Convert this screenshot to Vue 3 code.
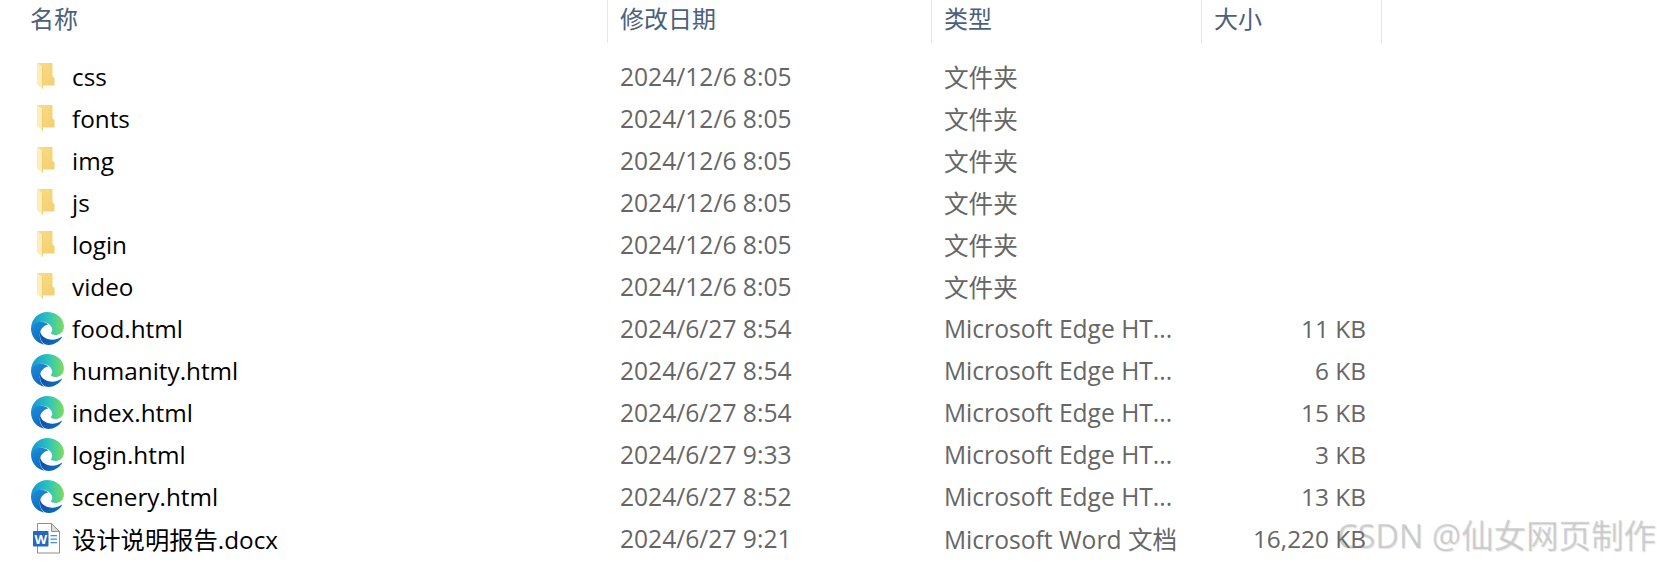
<template>
  <div class="explorer">
    <div class="list-header">
      <div v-for="col in columns" :key="col" class="head-cell">{{ col }}</div>
    </div>
    <div class="list-body">
      <div v-for="file in files" :key="file.name" class="file-row">
        <div class="name-cell">
          <span class="icon-box">
            <svg v-if="file.kind === 'folder'" class="folder-icon" width="20" height="28" viewBox="0 0 20 28">
              <defs>
                <linearGradient id="folderBack" x1="0" y1="0" x2="1" y2="1">
                  <stop offset="0" stop-color="#f8dc8a" />
                  <stop offset="1" stop-color="#f5cf6c" />
                </linearGradient>
              </defs>
              <path d="M1 1h15.500v13.500l2 1.500v7.500H7V6z" fill="url(#folderBack)" />
              <path d="M1 1l6 4.500V27l-6-4.500z" fill="#fdeeb8" />
              <path d="M7 5.500V27l-.8-.6V5z" fill="#e9c565" />
            </svg>
            <svg v-else-if="file.kind === 'edge'" class="edge-icon" width="33" height="33" viewBox="0 0 24 24">
              <defs>
                <linearGradient id="edgeTop" x1="0" y1="0.45" x2="1" y2="0.45">
                  <stop offset="0" stop-color="#1097d6" />
                  <stop offset="0.55" stop-color="#2fc6b9" />
                  <stop offset="1" stop-color="#7fdc5d" />
                </linearGradient>
                <linearGradient id="edgeLeft" x1="0.2" y1="0" x2="0.6" y2="1">
                  <stop offset="0" stop-color="#1b8ed9" />
                  <stop offset="1" stop-color="#0c65bd" />
                </linearGradient>
                <linearGradient id="edgeBottom" x1="0" y1="0" x2="1" y2="0.6">
                  <stop offset="0" stop-color="#0a4d9c" />
                  <stop offset="1" stop-color="#0f6cc6" />
                </linearGradient>
              </defs>
              <path d="M12 0C17 0 21.500 2.800 23.200 6.900 24.500 10 24.200 13.400 21.700 15.500 19.800 17.100 16.800 17 15.200 16.200 14.300 15.700 14.500 15.200 15 14.600 15.900 13.300 15.500 11 13.800 9.400 11.500 7.200 7.500 6.500 4.500 7.700 2 8.700 .3 10 0 12 .1 5.300 5.400 0 12 0z" fill="url(#edgeTop)" />
              <path d="M0 12C0 9.500 2.800 7.500 6 7.100 8.500 6.800 11 7.500 12.600 9.100 10 9.600 7.500 11.500 6.700 14.500 5.700 18.500 7.300 22 10 23.800 4.300 22.900 0 18 0 12z" fill="url(#edgeLeft)" />
              <path d="M6.900 14C7 17 9.500 18.700 12.200 19.700 15.500 20.700 19 20.300 22.300 18 22.600 17.800 22.600 18.300 22.400 18.600 20.500 21.800 16.500 24 12.800 24 8.500 24 5.500 19.500 6.900 14z" fill="url(#edgeBottom)" />
            </svg>
            <svg v-else class="word-icon" width="27" height="31" viewBox="0 0 27 31">
              <path d="M4.500 .5h14l8 8v21.500h-22z" fill="#ffffff" stroke="#8f8f8f" stroke-width="1" />
              <path d="M18.500 .5v8h8z" fill="#dcdcdc" stroke="#8f8f8f" stroke-width="1" />
              <rect x="0" y="8" width="15.500" height="15.500" rx="1" fill="#2468c4" />
              <text x="7.700" y="20.500" class="word-w">W</text>
              <rect x="17.500" y="12" width="6.500" height="1.300" fill="#4a90d9" />
              <rect x="17.500" y="15.500" width="6.500" height="1.300" fill="#4a90d9" />
              <rect x="17.500" y="19" width="6.500" height="1.300" fill="#4a90d9" />
            </svg>
          </span>
          <span class="file-name">{{ file.name }}</span>
        </div>
        <div class="muted-cell">{{ file.date }}</div>
        <div class="muted-cell">{{ file.type }}</div>
        <div class="size-cell">{{ file.size }}</div>
      </div>
    </div>
    <div class="watermark">CSDN @仙女网页制作</div>
  </div>
</template>

<script setup>
const columns = ['名称', '修改日期', '类型', '大小']

const folderDate = '2024/12/6 8:05'
const edgeType = 'Microsoft Edge HT...'

const files = [
  { name: 'css', kind: 'folder', date: folderDate, type: '文件夹', size: '' },
  { name: 'fonts', kind: 'folder', date: folderDate, type: '文件夹', size: '' },
  { name: 'img', kind: 'folder', date: folderDate, type: '文件夹', size: '' },
  { name: 'js', kind: 'folder', date: folderDate, type: '文件夹', size: '' },
  { name: 'login', kind: 'folder', date: folderDate, type: '文件夹', size: '' },
  { name: 'video', kind: 'folder', date: folderDate, type: '文件夹', size: '' },
  { name: 'food.html', kind: 'edge', date: '2024/6/27 8:54', type: edgeType, size: '11 KB' },
  { name: 'humanity.html', kind: 'edge', date: '2024/6/27 8:54', type: edgeType, size: '6 KB' },
  { name: 'index.html', kind: 'edge', date: '2024/6/27 8:54', type: edgeType, size: '15 KB' },
  { name: 'login.html', kind: 'edge', date: '2024/6/27 9:33', type: edgeType, size: '3 KB' },
  { name: 'scenery.html', kind: 'edge', date: '2024/6/27 8:52', type: edgeType, size: '13 KB' },
  { name: '设计说明报告.docx', kind: 'word', date: '2024/6/27 9:21', type: 'Microsoft Word 文档', size: '16,220 KB' }
]
</script>

<style>
html, body {
  background: #fff;
}
</style>

<style scoped>
.explorer {
  position: relative;
  width: 1657px;
  height: 565px;
  overflow: hidden;
  background: #fff;
  font-family: "Open Sans", "Noto Sans CJK SC", sans-serif;
}
.list-header,
.file-row {
  display: grid;
  grid-template-columns: 608px 324px 270px 180px;
}
.list-header {
  height: 43px;
}
.head-cell {
  padding: 0 0 8px 12px;
  display: flex;
  align-items: center;
  border-right: 1px solid #e5e5e5;
  color: #4c607a;
  font-size: 24px;
}
.head-cell:first-child {
  padding-left: 30px;
}
.list-body {
  padding-top: 12px;
}
.file-row {
  height: 42px;
  align-items: center;
  white-space: nowrap;
}
.name-cell {
  display: flex;
  align-items: center;
  padding-left: 31px;
  font-size: 24.300px;
}
.icon-box {
  width: 41px;
  display: flex;
  align-items: center;
  justify-content: flex-start;
}
.icon-box svg {
  display: block;
}
.folder-icon {
  margin-left: 5px;
}
.word-icon {
  margin-left: 2px;
}
.file-name {
  color: #000;
}
.muted-cell {
  padding-left: 12px;
  color: #666;
  font-size: 24.600px;
}
.size-cell {
  padding-right: 16px;
  text-align: right;
  color: #666;
  font-size: 24.400px;
}
.word-w {
  fill: #fff;
  font-size: 13px;
  font-weight: 700;
  text-anchor: middle;
}
.watermark {
  position: absolute;
  left: 1337px;
  top: 510px;
  color: rgba(130, 130, 130, 0.3);
  font-size: 32.500px;
  white-space: nowrap;
  text-shadow: 1px 1px 1px rgba(150, 150, 150, 0.25);
}
</style>
